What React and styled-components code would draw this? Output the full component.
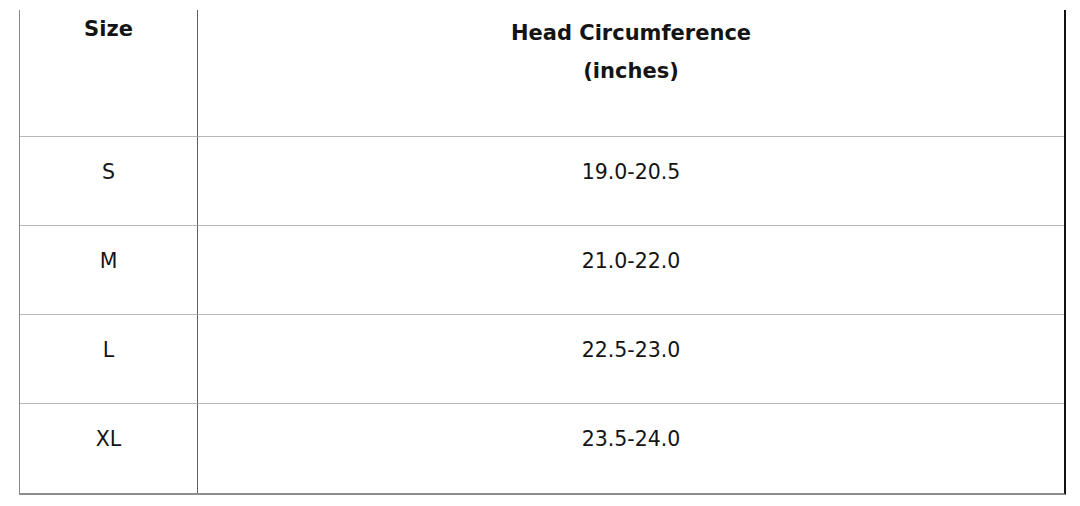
import React from 'react';
import styled, { createGlobalStyle } from 'styled-components';

const GlobalStyle = createGlobalStyle`
    body {
        margin: 0;
        background: #fff;
        font-family: 'DejaVu Sans', 'Liberation Sans', sans-serif;
        color: #141414;
    }
`;

const Page = styled.div`
    padding: 10px 0 0 19px;
`;

const Chart = styled.div`
    box-sizing: border-box;
    width: 1047px;
    display: grid;
    grid-template-columns: 178px 1fr;
    border-left: 1px solid #8a8a8a;
    border-right: 2px solid #111;
    border-bottom: 2px solid #8c8c8c;
`;

const Cell = styled.div`
    box-sizing: border-box;
    height: ${props => props.head ? '127px' : '89px'};
    padding-top: ${props => props.pad ?? 23}px;
    text-align: center;
    font-size: ${props => props.head ? '21px' : '20.5px'};
    font-weight: ${props => props.head ? 700 : 400};
    line-height: ${props => props.head ? '38px' : '24px'};
    border-bottom: ${props => props.last ? 'none' : '1px solid #b8b8b8'};
    border-right: ${props => props.first ? '1px solid #5e5e5e' : 'none'};
`;

const rows = [
    ['S', '19.0-20.5'],
    ['M', '21.0-22.0'],
    ['L', '22.5-23.0'],
    ['XL', '23.5-24.0'],
];

export default function App() {
    return (
        <Page>
            <GlobalStyle />
            <Chart>
                <Cell head first pad={0}>Size</Cell>
                <Cell head pad={4}>Head Circumference<br />(inches)</Cell>
                {rows.map(([size, range], i) => (
                    <React.Fragment key={size}>
                        <Cell first last={i === rows.length - 1}>{size}</Cell>
                        <Cell last={i === rows.length - 1}>{range}</Cell>
                    </React.Fragment>
                ))}
            </Chart>
        </Page>
    );
}
